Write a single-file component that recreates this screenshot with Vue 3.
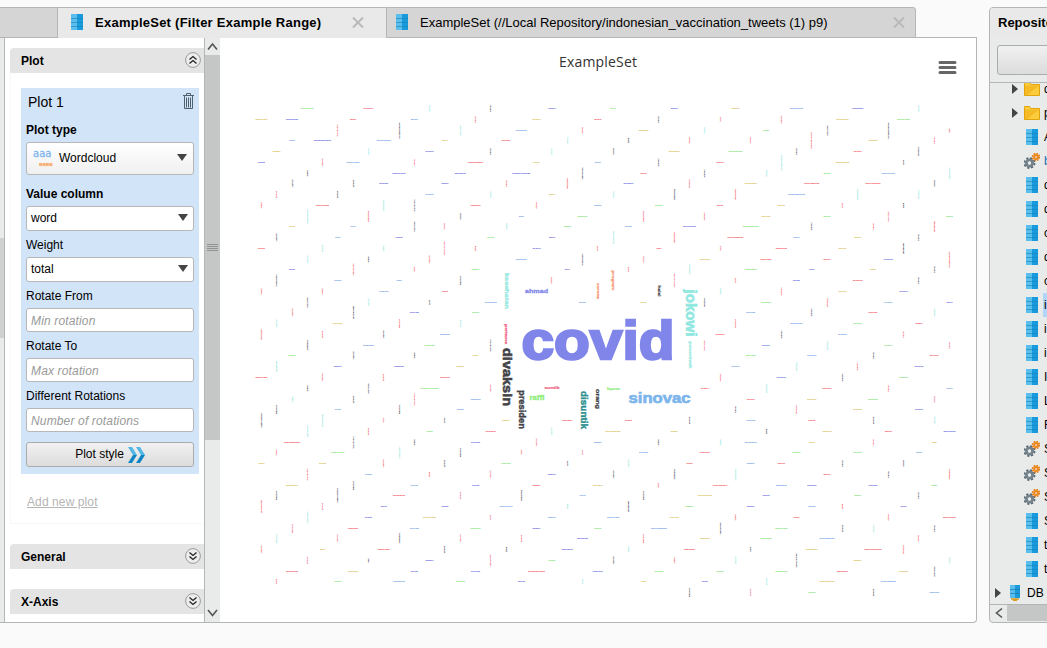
<script setup>
const colors = {
  b: '#6f9fe6', p: '#6469e0', g: '#7be46f', y: '#d8bd57', r: '#f15c80',
  c: '#f4525c', d: '#4a4658', a: '#85e4d8',
}

// Each row: column, colour (upper case = rotated by 90 degrees), length
const rows = [
  '3g13 7r10 11A7 15D7 19p7 23g6 27p7 31y8 35b13 39p11 43A7',
  '0y12 2p12 6c6 10b7 14C7 18y8 22c7 26D7 30R5 34C8 38y12 42g13',
  '5C12 9D16 13A10 17b11 21C6 25y10 29A6 33g6 37D10 41D16 45C4',
  '2b6 4p17 8b14 12y6 16c9 20A7 24D5 28C6 32R6 36C17 40y9 44R7',
  '1y8 7A7 11p8 15D7 19A7 23D6 27y11 31g14 35D7 39c8 43D9',
  '0p7 4C8 6b13 10R7 14c15 18y6 22b6 26D8 30c7 34A16 38y14 42D5',
  '3D6 9p13 13p11 17p18 21D12 25c6 29D8 33A6 37g7 41b13 45A12',
  '2D8 6D7 8p9 12p7 16C7 20C11 24p10 28R9 32y12 36c15 40c15 44D6',
  '1R7 5D7 11b8 15A7 19y6 23A7 27D11 31C11 35b17 39A11 43A9',
  '0C6 4c13 8A11 10D12 14c10 18C6 22b7 26g8 30c6 34y7 38C5 42D5',
  '3A15 7C11 13D6 17b5 21g10 25R11 29C8 33y9 37g7 41R10 45g7',
  '2y6 6b5 10D10 12R6 16A6 20g7 24b7 28p13 32g16 36D8 40C7 44C11',
  '1D8 5b5 9p7 15g7 19p6 23A13 27C11 31c16 35b6 39y7 43D7',
  '0c7 4A7 8A5 12R14 14C5 18p8 22C5 26c5 30R5 34c11 38y8 42D11',
  '3A8 7D6 11C8 17b11 21D12 25R6 29y10 33c11 37c7 41p9 45C16',
  '2p6 6C12 10C5 14g8 20p5 24R5 28A10 32g12 36p5 40y6 44D7',
  '1D12 5b7 9b5 13D9 19C6 27R14 31C5 35p7 39c10 43D7',
  '0C6 4C6 8b9 12c6 30A6 34C8 38y8 42p8',
  '3D10 7A8 11D5 15b12 21b7 25y6 29D9 33g10 37C9 41b8 45p6',
  '2C8 6D13 10p9 14g7 32b9 36D8 40c9 44A8',
  '1A8 5y9 9C9 13A7 31C9 35b12 39g8 43c7',
  '0C11 4C7 8D8 12b10 30c9 34D8 38b9 42R7',
  '3D10 7b11 11g10 15D12 29R10 33p8 37A9 41g8 45R7',
  '2g7 6D8 10D6 14y6 32g10 36b9 40D7 44c9',
  '1A11 5p8 9p10 13y8 31b8 35A9 39C8 43p9',
  '0c12 4C8 8C7 12c10 30C8 34p9 38D8 42g9',
  '3D6 7D10 11g18 15R8 29c8 33A9 37c9 41C7 45b6',
  '2A6 6D7 10C12 14b10 32c8 36y9 40g10 44R6',
  '1D9 5b6 9D9 13b7 31D7 35R9 39y9 43p8',
  '0D15 4A13 8R5 12D5 16y8 20c10 24c7 28D7 32b9 36c7 40D7 44A8',
  '3A12 7C7 11g6 15c10 19A8 23y15 27y7 33D5 37y9 41c7 45p12',
  '2c16 6D12 10D6 14p9 18R8 22b8 26D6 30A6 32b12 36y6 40R7 44y5',
  '1R6 5g13 9A12 13D9 17C5 21R5 25b9 29c10 35g8 39g8 43b6',
  '0y6 4y7 8C8 12D7 16g9 20D5 24A8 28c6 32b8 34c7 38D7 42D6',
  '3C12 7b7 11C5 15R8 19p8 23D8 27D10 31A12 37c7 41D7 45C10',
  '2y12 6D9 10b7 14p7 18c8 22y10 26C5 30c14 34b11 36p9 40p9 44g6',
  '1D9 5D15 9c12 13R7 17D11 21b6 25D9 29y14 33p7 39g7 43D7',
  '0C13 4R7 8p6 12p7 16b13 20A5 24D11 28g8 32p8 36b7 38C5 42p6',
  '3A12 7p7 11y13 15R5 19b8 23b12 27y9 31C6 35c6 41C6 45c13',
  '2R9 6c10 10b9 14g10 18p8 22g7 26b16 30D12 34g12 38D7 40A8 44D7',
  '1A9 5R8 9D10 13R8 17C7 21p11 25C9 29y10 33g11 37b15 43C6',
  '0C8 4y5 8c12 12D7 16D5 20p11 24A6 28c11 32D5 36y12 40c17 42C9',
  '3R7 7D4 11p8 15R12 19g7 23D8 27C6 31A8 35D14 39y8 45A6',
  '2c12 6y10 10p7 14p9 18c17 22p10 26g9 30g7 34g12 38c11 42y9 44D10',
  '1R5 5g7 9b12 13g9 17p7 21A5 25y5 29p6 33A7 37y15 41b15',
  '28D9 32R7 36g7 40D7 44b10',
]
const vocab = {
  3: ['ibu', 'apa'], 4: ['kami', 'satu', 'baru'], 5: ['warga', 'sehat', 'tahap', 'medis'],
  6: ['vaksin', 'dokter', 'kepala', 'negara'], 7: ['menteri', 'program', 'bandung', 'petugas'],
  8: ['nasional', 'mendapat', 'tanggal'], 9: ['kesehatan', 'menerima', 'indonesia'],
  10: ['pemerintah', 'masyarakat'], 11: ['vaksinasinya', 'penyuntikan'], 12: ['keselamatan'],
  13: ['mensukseskan'], 14: ['pemberitahuan'],
}
const smallWords = rows.flatMap((row, r) =>
  row.split(' ').map((token) => {
    const [, col, key, len] = token.match(/^(\d+)(\w)(\d+)$/)
    const n = Math.max(3, Math.min(14, Math.round(len / 1.3)))
    const list = vocab[n]
    return {
      x: +(261.4 + col * 15.29).toFixed(1),
      y: Math.round(108.1 + r * 10.756) + 0.5,
      len: +len,
      text: list[(r + +col) % list.length],
      vertical: key !== key.toLowerCase(),
      fill: colors[key.toLowerCase()],
    }
  }))

// x, y are the middle of the baseline; s is the font size, w the drawn length
const bigWords = [
  { t: 'covid', x: 598, y: 359.2, s: 53.5, w: 153, f: '#8085e9' },
  { t: 'sinovac', x: 659.5, y: 402.700, s: 14.5, w: 62, f: '#7cb5ec' },
  { t: 'ahmad', x: 536.5, y: 293, s: 6, w: 23, f: '#8085e9' },
  { t: 'raffi', x: 537, y: 400, s: 6.5, w: 15, f: '#90ed7d' },
  { t: 'suntik', x: 552, y: 389, s: 4.2, w: 15, f: '#f15c80' },
  { t: 'bpom', x: 613.5, y: 389.5, s: 4.2, w: 13, f: '#90ed7d' },
  { t: 'jokowi', x: 686, y: 313, s: 14, w: 47, f: '#91e8e1', v: 1 },
  { t: 'divaksin', x: 503, y: 377, s: 12.5, w: 58, f: '#434348', v: 1 },
  { t: 'presiden', x: 519, y: 409.5, s: 9, w: 39, f: '#434348', v: 1 },
  { t: 'disuntik', x: 580.5, y: 410, s: 9, w: 38, f: '#2b908f', v: 1 },
  { t: 'orang', x: 596, y: 399, s: 6, w: 20, f: '#434348', v: 1 },
  { t: 'kesehatan', x: 505, y: 291, s: 6, w: 36, f: '#91e8e1', v: 1 },
  { t: 'pertama', x: 504.5, y: 334, s: 4.2, w: 20, f: '#f15c80', v: 1 },
  { t: 'corona', x: 597, y: 291, s: 4.2, w: 16, f: '#f7936c', v: 1 },
  { t: 'program', x: 611.5, y: 280.5, s: 4.2, w: 20, f: '#f7936c', v: 1 },
  { t: 'halal', x: 658, y: 291, s: 4, w: 11, f: '#434348', v: 1 },
  { t: 'pemerintah', x: 688.5, y: 355, s: 4.4, w: 27, f: '#91e8e1', v: 1 },
]

const tree = [
  ['folder', 'data'], ['folder', 'processes'], ['data', 'A'], ['gear', 'b'], ['data', 'd'],
  ['data', 'd'], ['data', 'c'], ['data', 'd'], ['data', 'c'], ['data', 'i', true],
  ['data', 'i'], ['data', 'i'], ['data', 'I'], ['data', 'L'], ['data', 'R'],
  ['gear', 'S'], ['gear', 'S'], ['gear', 'S'], ['data', 'S'], ['data', 't'], ['data', 't'],
]
</script>

<template>
  <div class="app">
    <svg class="defs" width="0" height="0">
      <defs>
        <symbol id="data" viewBox="0 0 12 16">
          <rect width="12" height="16" fill="#189bdc" />
          <rect width="6" height="16" fill="#5abfec" />
          <path d="M0 4.500h12M0 8.500h12M0 12.500h12" stroke="#1b7fb5" opacity=".6" />
        </symbol>
        <symbol id="folder" viewBox="0 0 16 14">
          <path d="M.5 1.500V13.500h15V2.500H7L5.500.500H.500z" fill="#fbcd3d" stroke="#e2a30d" />
          <path d="M1 3.500h14V4L3 13H1z" fill="#f5ba25" />
        </symbol>
        <symbol id="gear" viewBox="0 0 16 16">
          <circle cx="5.500" cy="10" r="5" fill="none" stroke="#56646d" stroke-width="1.800" stroke-dasharray="2.100 1.827" />
          <circle cx="5.500" cy="10" r="3.100" fill="none" stroke="#74828b" stroke-width="2.900" />
          <circle cx="5.500" cy="10" r="1.600" fill="#e8ebea" />
          <circle cx="12" cy="4" r="3.500" fill="none" stroke="#e0740c" stroke-width="1.500" stroke-dasharray="1.500 1.249" />
          <circle cx="12" cy="4" r="2" fill="none" stroke="#f08c25" stroke-width="2.300" />
        </symbol>
        <symbol id="chev" viewBox="0 0 16 16">
          <circle cx="8" cy="8" r="7.400" fill="#ededed" stroke="#9b9b9b" />
          <path d="M4.500 7.500 8 4.500l3.500 3M4.500 11.500 8 8.500l3.500 3" fill="none" stroke="#222" stroke-width="1.300" />
        </symbol>
      </defs>
    </svg>

    <main class="workspace">
      <nav class="tabs">
        <div class="tab stub"></div>
        <div class="tab active">
          <svg class="tab-icon" width="12" height="16"><use href="#data" /></svg>
          <span class="tab-title bold">ExampleSet (Filter Example Range)</span>
          <svg class="close" width="12" height="11" viewBox="0 0 12 11"><path d="M1 .5l10 10M11 .5l-10 10" /></svg>
        </div>
        <div class="tab other">
          <svg class="tab-icon" width="12" height="16"><use href="#data" /></svg>
          <span class="tab-title">ExampleSet (//Local Repository/indonesian_vaccination_tweets (1) p9)</span>
          <svg class="close" width="12" height="11" viewBox="0 0 12 11"><path d="M1 .5l10 10M11 .5l-10 10" /></svg>
        </div>
        <div class="tab-rest"></div>
      </nav>

      <section class="content">
        <div class="gutter"><div class="gutter-thumb"></div></div>
        <aside class="settings">
          <div class="section-head">Plot<svg width="16" height="16"><use href="#chev" /></svg></div>
          <div class="section-body">
            <div class="card">
              <div class="card-title">
                Plot 1
                <svg class="trash" width="11" height="16" viewBox="0 0 11 16" fill="none" stroke="#50616e">
                  <path d="M0 2.500h11M3.500 2V.500h4V2M1.500 3v12.500h8V3M3.500 4.500v10M5.500 4.500v10M7.500 4.500v10" />
                </svg>
              </div>
              <div class="label bold type">Plot type</div>
              <div class="field select big">
                <span class="cloud-icon"><i>aaa</i><i>eeee</i></span>
                <span>Wordcloud</span><b class="arrow"></b>
              </div>
              <div class="label bold tall">Value column</div>
              <div class="field select"><span>word</span><b class="arrow"></b></div>
              <div class="label weight">Weight</div>
              <div class="field select"><span>total</span><b class="arrow"></b></div>
              <div class="label">Rotate From</div>
              <div class="field input">Min rotation</div>
              <div class="label">Rotate To</div>
              <div class="field input">Max rotation</div>
              <div class="label">Different Rotations</div>
              <div class="field input">Number of rotations</div>
              <div class="field button">
                Plot style
                <svg width="17" height="16" viewBox="0 0 17 16">
                  <path d="M0 0h4l5 8H5zM8 0h4l5 8h-4z" fill="#50b6e5" />
                  <path d="M5 8h4l-5 8H0zM13 8h4l-5 8H8z" fill="#0f86c4" />
                </svg>
              </div>
            </div>
            <div class="add">Add new plot</div>
          </div>
          <div class="section-head gap">General<svg class="down" width="16" height="16"><use href="#chev" /></svg></div>
          <div class="section-head gap">X-Axis<svg class="down" width="16" height="16"><use href="#chev" /></svg></div>
        </aside>

        <div class="scrollbar">
          <svg width="15" height="17" viewBox="0 0 15 17"><path d="M3 11.500 7.500 6l4.500 5.500" /></svg>
          <div class="thumb"><hr><hr><hr><hr></div>
          <svg class="bottom" width="15" height="20" viewBox="0 0 15 20"><path d="M3 8 7.500 13.500 12 8" /></svg>
        </div>

        <svg class="chart" width="756" height="583" viewBox="220 38 756 583">
          <text class="chart-title" x="598" y="67" text-anchor="middle" textLength="78">ExampleSet</text>
          <path d="M940 62.500h15M940 67.500h15M940 72.500h15" stroke="#666" stroke-width="3" stroke-linecap="round" />
          <g class="small">
            <text
              v-for="(w, i) in smallWords" :key="i" text-anchor="middle" :fill="w.fill"
              :textLength="w.len" lengthAdjust="spacingAndGlyphs"
              :transform="`translate(${w.x} ${w.y})${w.vertical ? ' rotate(90)' : ''}`" y="0.5"
            >{{ w.text }}</text>
          </g>
          <g class="words">
            <text
              v-for="w in bigWords" :key="w.t" text-anchor="middle" :font-size="w.s" :fill="w.f"
              :stroke="w.f" :stroke-width="w.s * 0.045"
              :textLength="w.w" lengthAdjust="spacingAndGlyphs"
              :transform="`translate(${w.x} ${w.y})${w.v ? ' rotate(90)' : ''}`"
            >{{ w.t }}</text>
          </g>
        </svg>
      </section>
    </main>

    <aside class="repo">
      <div class="repo-head">Repository</div>
      <div class="repo-tools"><div class="repo-button"></div></div>
      <div class="tree">
        <div v-for="(n, i) in tree" :key="i" class="node">
          <span class="twisty"><i v-if="n[0] === 'folder'"></i></span>
          <svg :class="n[0]" :width="n[0] === 'data' ? 12 : 16" :height="n[0] === 'folder' ? 14 : 16"><use :href="'#' + n[0]" /></svg>
          <span class="name" :class="{ picked: n[2], link: n[0] === 'gear' && n[1] === 'b' }">{{ n[1] }}</span>
        </div>
        <div class="node db">
          <span class="twisty"><i></i></span>
          <svg width="10" height="16" viewBox="0 0 10 16">
            <rect width="10" height="13" fill="#1b9ada" /><rect width="5" height="13" fill="#58bdea" />
            <path d="M0 4.500h10M0 8.500h10" stroke="#1779ad" opacity=".65" />
            <path d="M1 14h8M3 15.500h4" stroke="#d99b20" stroke-width="1.500" />
          </svg>
          <span class="name">DB</span>
        </div>
      </div>
      <div class="hscroll"><svg width="17" height="16" viewBox="0 0 17 16"><path d="M12 3.500 6.500 8l5.500 4.500" /></svg><div></div></div>
    </aside>
  </div>
</template>

<style>
body { background: #fafafa; overflow: hidden; }
</style>

<style scoped>
* { box-sizing: border-box; }
.app {
  position: relative; width: 1047px; height: 648px; padding-top: 7px; overflow: hidden;
  display: flex; gap: 12px; align-items: flex-start; background: #fafafa;
  font: 12px "Liberation Sans", Arial, sans-serif; color: #000;
}
.defs { position: absolute; }
.bold { font-weight: bold; }
.workspace { width: 977px; flex: none; }
.tabs { display: flex; height: 31px; }
.tab {
  display: flex; align-items: center; border: 1px solid #b4b5b5; border-left: 0;
  background: #d5d5d5; white-space: nowrap;
}
.stub { width: 58px; }
.active { width: 328px; background: #e9e9e9; border-bottom-color: #e9e9e9; border-right: 0; padding-left: 13px; }
.other { width: 530px; border-left: 1px solid #b4b5b5; border-top-right-radius: 3px; padding-left: 9px; }
.tab-rest { flex: 1; border-bottom: 1px solid #b4b5b5; }
.tab-icon { margin-top: -1px; }
.tab-title { font-size: 13px; margin-left: 12px; letter-spacing: .25px; }
.active .tab-title { width: 257px; }
.other .tab-title { width: 473px; letter-spacing: 0; }
.close { margin-top: -1px; }
.close path { stroke: #b9b9b9; stroke-width: 2; }
.content {
  display: flex; height: 585px; background: #fff; overflow: hidden;
  border: solid #b4b5b5; border-width: 0 1px 1px 0; border-bottom-right-radius: 4px;
}
.gutter { width: 5px; padding-top: 200px; background: #e8ebea; border-right: 1px solid #b4b5b5; }
.gutter-thumb { height: 100px; background: #cfd1d0; }
.settings { width: 199px; padding: 10px 0 0 5px; }
.section-head {
  display: flex; align-items: center; justify-content: space-between; height: 25px;
  padding: 1px 3px 0 11px; background: #e4e4e4; border-top-left-radius: 4px; font-weight: bold;
}
.section-head svg { margin-top: -2px; }
.section-head.gap { margin-top: 20px; }
.down { transform: scaleY(-1); }
.section-body { height: 451px; padding: 15px 5px 0 10px; border: solid #f8f8f8; border-width: 0 0 1px 1px; }
.card { width: 178px; height: 386px; padding: 0 5px; background: #d2e4f8; }
.card-title {
  display: flex; justify-content: space-between; align-items: center;
  height: 28px; padding-left: 2px; font-size: 14px;
}
.trash { margin-top: -2px; }
.label { height: 26px; line-height: 28px; }
.label.type { line-height: 28px; }
.label.tall { height: 31px; line-height: 39px; }
.label.weight { line-height: 28px; }
.field {
  height: 24px; padding: 0 4px; line-height: 25px; background: #fff;
  border: 1px solid #b7b7b7; border-radius: 3px;
}
.select { height: 25px; display: flex; align-items: center; }
.big { height: 33px; padding: 0 6px; background: linear-gradient(#fff, #f0f0f0); }
.arrow { margin: -2px 1px 0 auto; border: solid transparent; border-width: 7px 5px 0; border-top-color: #444; }
.big .arrow { margin-right: 0; border-width: 7px 5.500px 0; }
.cloud-icon { width: 26px; height: 20px; display: flex; flex-direction: column; gap: 1px; line-height: 1; }
.cloud-icon i { display: block; height: 12px; font: 10px/9px "DejaVu Sans", sans-serif; color: #7cb5ec; -webkit-text-stroke: .3px; }
.cloud-icon i + i { height: 7px; margin-left: 6px; font-size: 5.500px; line-height: 5px; color: #f7a35c; }
.input { color: #999; font-style: italic; letter-spacing: .15px; }
.button {
  display: flex; align-items: center; justify-content: center; gap: 4px; height: 25px;
  margin-top: 10px; background: linear-gradient(#f1f1f1, #dcdcdc); border-color: #acacac;
}
.add { margin: 21px 0 0 6px; color: #b5b5b5; text-decoration: underline; letter-spacing: .1px; }
.scrollbar { width: 16px; flex: none; display: flex; flex-direction: column; background: #e8ebea; border-left: 1px solid #b4b5b5; }
.scrollbar path, .hscroll path { fill: none; stroke: #555; stroke-width: 1.600; }
.thumb { height: 385px; padding: 189px 2px 0; background: #c5c7c6; }
.thumb hr { height: 1px; margin: 0 0 1px; border: 0; background: #929292; }
.bottom { margin-top: auto; }
.chart { flex: none; }
.chart-title { font: 14px "Open Sans", "Noto Sans", sans-serif; fill: #333; }
.small { font: 800 2.200px "Open Sans", sans-serif; }
.words { font-family: "Liberation Sans", Arial, sans-serif; font-weight: bold; }
.repo {
  width: 90px; height: 616px; flex: none; background: #e8ebea;
  border: 1px solid #b4b5b5; border-radius: 4px; overflow: hidden;
}
.repo-head { height: 30px; padding-left: 8px; line-height: 29px; font-size: 13px; font-weight: bold; background: #e9e9e9; }
.repo-tools { height: 45px; padding: 7px 0 0 7px; border-bottom: 1px solid #b4b5b5; }
.repo-button { height: 30px; border: 1px solid #acacac; border-radius: 3px; background: linear-gradient(#f1f1f1, #dcdcdc); }
.tree { height: 522px; overflow: hidden; border-bottom: 1px solid #b4b5b5; }
.node { display: flex; align-items: center; height: 24px; }
.node:first-child { margin-top: -6px; }
.twisty { width: 34px; padding-left: 22px; flex: none; }
.twisty i { display: block; width: 0; border: solid transparent; border-width: 5px 0 5px 6px; border-left-color: #444; }
.node svg { flex: none; }
.node svg.data { margin: 0 2px; }
.name { margin-left: 3px; padding-left: 1px; line-height: 25px; height: 24px; }
.picked { background: #b2d5fb; }
.link { color: #1a6fb0; }
.db .twisty { width: 20px; padding-left: 5px; }
.db .name { margin-left: 6px; }
.hscroll { display: flex; height: 16px; }
.hscroll div { flex: 1; background: #c5c7c6; }
</style>
